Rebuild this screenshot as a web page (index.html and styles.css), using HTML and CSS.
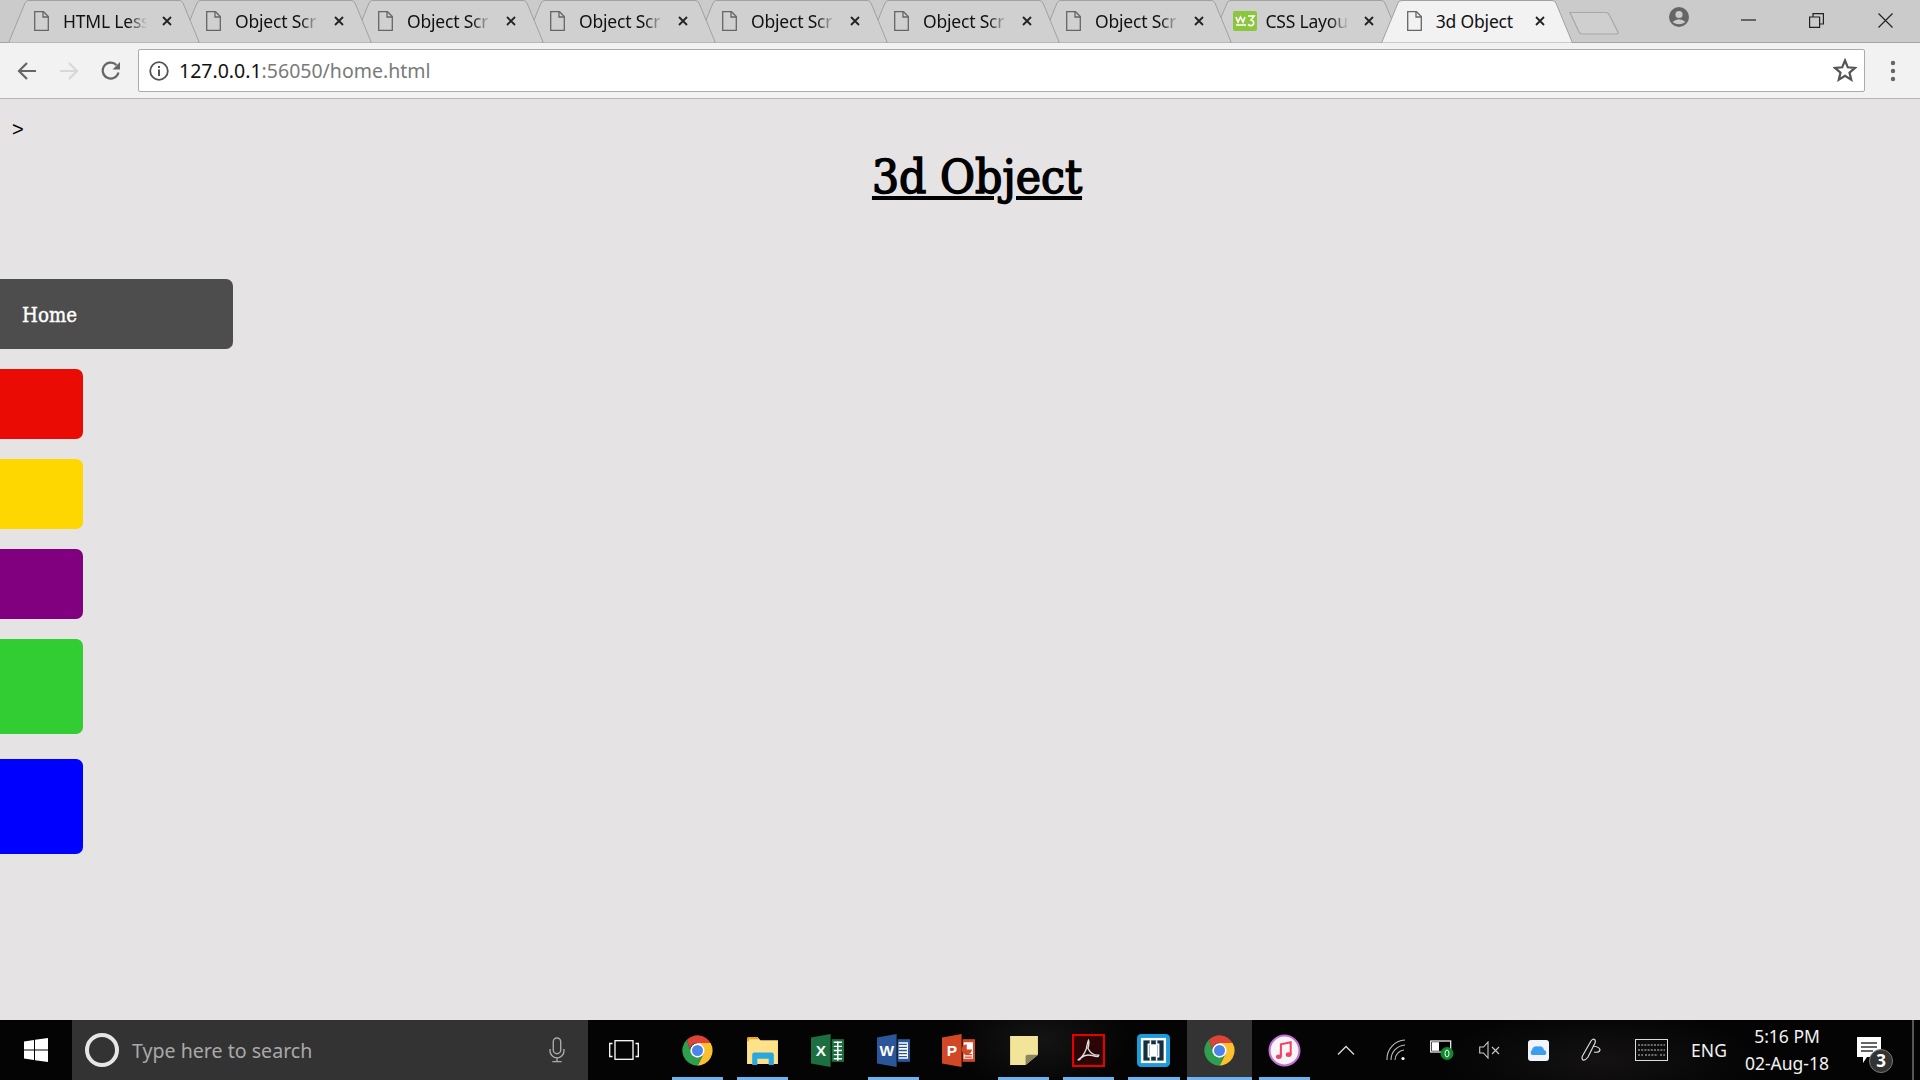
FILE: index.html
```html
<!DOCTYPE html>
<html lang="en">
    <head>
        <meta charset="UTF-8">
        <title>3d Object</title>
        <link rel="stylesheet" href="styles.css">
    </head>

    <body>
        <svg class="defs" width="0" height="0">
            <symbol id="tab-shape" viewBox="0 0 192 43">
                <path d="M0.5 43 L17 3 Q18 0.5 21 0.5 H171 Q174 0.5 175 3 L191.5 43 Z"/>
            </symbol>
            <symbol id="page-icon" viewBox="0 0 15 20">
                <path d="M0.7 0.7 H9.5 L14.3 5.5 V19.3 H0.7 Z" fill="none" stroke="#666" stroke-width="1.3"/>
                <path d="M9 1 V6 H14" fill="none" stroke="#666" stroke-width="1.3"/>
            </symbol>
            <symbol id="close-x" viewBox="0 0 10 10">
                <path d="M1 1 L9 9 M9 1 L1 9" stroke="#222" stroke-width="1.8"/>
            </symbol>
            <symbol id="chrome" viewBox="0 0 48 48">
                <path d="M8.4 8.4 A22 22 0 0 1 43.05 13 H24 A10 10 0 0 0 15.34 29 Z" fill="#db4437"/>
                <path d="M43.05 13 A22 22 0 0 1 24 46 L32.66 29 A10 10 0 0 0 24 14 V13 Z" fill="#fbc02d"/>
                <path d="M8.4 8.4 A22 22 0 0 0 24 46 L32.66 29 A10 10 0 0 1 15.34 29 Z" fill="#2e9e4f"/>
                <circle cx="24" cy="24" r="10.5" fill="#fff"/>
                <circle cx="24" cy="24" r="8" fill="#4a86e8"/>
            </symbol>
        </svg>

        <div class="tabbar">
            <div class="tab"><svg class="tab-bg"><use href="#tab-shape"/></svg><svg class="tab-icon"><use href="#page-icon"/></svg><span class="tab-title">HTML Less</span><svg class="tab-close"><use href="#close-x"/></svg></div>
            <div class="tab"><svg class="tab-bg"><use href="#tab-shape"/></svg><svg class="tab-icon"><use href="#page-icon"/></svg><span class="tab-title">Object Scr</span><svg class="tab-close"><use href="#close-x"/></svg></div>
            <div class="tab"><svg class="tab-bg"><use href="#tab-shape"/></svg><svg class="tab-icon"><use href="#page-icon"/></svg><span class="tab-title">Object Scr</span><svg class="tab-close"><use href="#close-x"/></svg></div>
            <div class="tab"><svg class="tab-bg"><use href="#tab-shape"/></svg><svg class="tab-icon"><use href="#page-icon"/></svg><span class="tab-title">Object Scr</span><svg class="tab-close"><use href="#close-x"/></svg></div>
            <div class="tab"><svg class="tab-bg"><use href="#tab-shape"/></svg><svg class="tab-icon"><use href="#page-icon"/></svg><span class="tab-title">Object Scr</span><svg class="tab-close"><use href="#close-x"/></svg></div>
            <div class="tab"><svg class="tab-bg"><use href="#tab-shape"/></svg><svg class="tab-icon"><use href="#page-icon"/></svg><span class="tab-title">Object Scr</span><svg class="tab-close"><use href="#close-x"/></svg></div>
            <div class="tab"><svg class="tab-bg"><use href="#tab-shape"/></svg><svg class="tab-icon"><use href="#page-icon"/></svg><span class="tab-title">Object Scr</span><svg class="tab-close"><use href="#close-x"/></svg></div>
            <div class="tab">
                <svg class="tab-bg"><use href="#tab-shape"/></svg>
                <svg class="tab-icon w3-icon" viewBox="0 0 24 20">
                    <rect width="24" height="20" rx="2" fill="#8cc63f"/>
                    <path d="M3 6 L5 11 L7.5 6 L10 11 L12 6 M3 14 H13 M15 5 H21 L18 9 Q21.5 10 20.5 13 Q18.5 16 15 13.5" fill="none" stroke="#fff" stroke-width="1.6"/>
                </svg>
                <span class="tab-title">CSS Layou</span>
                <svg class="tab-close"><use href="#close-x"/></svg>
            </div>
            <div class="tab active"><svg class="tab-bg"><use href="#tab-shape"/></svg><svg class="tab-icon"><use href="#page-icon"/></svg><span class="tab-title">3d Object</span><svg class="tab-close"><use href="#close-x"/></svg></div>

            <svg class="new-tab" viewBox="0 0 50 24"><path d="M1 1.5 H37 Q39 1.5 40 3.5 L49 21 Q49.5 23 47 23 H13 Q11 23 10 21 Z"/></svg>

            <div class="window-btns">
                <svg class="avatar" viewBox="0 0 20 20"><circle cx="10" cy="10" r="10" fill="#666"/><circle cx="10" cy="7.5" r="3.6" fill="#cbcbcb"/><path d="M3.5 15 Q10 9.5 16.5 15 Q10 19.5 3.5 15 Z" fill="#cbcbcb"/></svg>
                <svg class="win-min" viewBox="0 0 15 2"><path d="M0 1 H15" stroke="#222" stroke-width="1.2"/></svg>
                <svg class="win-max" viewBox="0 0 15 15"><path d="M0.6 4 H10.6 V14.4 H0.6 Z M4 4 V0.6 H14.4 V11 H10.6" fill="none" stroke="#222" stroke-width="1.2"/></svg>
                <svg class="win-close" viewBox="0 0 15 15"><path d="M0.5 0.5 L14.5 14.5 M14.5 0.5 L0.5 14.5" stroke="#222" stroke-width="1.2"/></svg>
            </div>
        </div>

        <div class="toolbar">
            <svg class="nav-icon" viewBox="0 0 20 20"><path d="M19 10 H2.5 M10 2 L2 10 L10 18" fill="none" stroke="#666" stroke-width="2.2"/></svg>
            <svg class="nav-icon" viewBox="0 0 20 20"><path d="M1 10 H17.5 M10 2 L18 10 L10 18" fill="none" stroke="#d8d8d8" stroke-width="2.2"/></svg>
            <svg class="nav-icon" viewBox="0 0 20 20"><path d="M17.5 11.5 A8 8 0 1 1 15.5 4" fill="none" stroke="#666" stroke-width="2.2"/><path d="M19 1 V8.5 H11.5 Z" fill="#666"/></svg>
            <div class="omnibox">
                <svg class="info-icon" viewBox="0 0 20 20"><circle cx="10" cy="10" r="8.8" fill="none" stroke="#555" stroke-width="1.8"/><rect x="9" y="8.5" width="2" height="6.5" fill="#555"/><rect x="9" y="5" width="2" height="2" fill="#555"/></svg>
                <span class="url"><span class="url-host">127.0.0.1</span>:56050/home.html</span>
                <svg class="star-icon" viewBox="0 0 24 24"><path d="M12 2.5 L14.8 9.3 L22 9.9 L16.5 14.6 L18.2 21.7 L12 17.9 L5.8 21.7 L7.5 14.6 L2 9.9 L9.2 9.3 Z" fill="none" stroke="#555" stroke-width="2.2" stroke-linejoin="miter"/></svg>
            </div>
            <svg class="menu-icon" viewBox="0 0 6 22"><circle cx="3" cy="3" r="2.2"/><circle cx="3" cy="11" r="2.2"/><circle cx="3" cy="19" r="2.2"/></svg>
        </div>

        <main class="page">
            <p class="stray">&gt;</p>
            <h1 class="title">3d Object</h1>
            <nav class="side-nav">
                <a class="nav-item home">Home</a>
                <a class="nav-item small red"></a>
                <a class="nav-item small gold"></a>
                <a class="nav-item small purple"></a>
                <a class="nav-item small tall green"></a>
                <a class="nav-item small tall blue"></a>
            </nav>
        </main>

        <footer class="taskbar">
            <div class="start">
                <svg class="win-logo" viewBox="0 0 24 24"><path d="M0 3.4 L10 2 V11.4 H0 Z M11 1.8 L24 0 V11.4 H11 Z M0 12.6 H10 V22 L0 20.6 Z M11 12.6 H24 V24 L11 22.2 Z" fill="#fff"/></svg>
            </div>
            <div class="search">
                <span class="cortana"></span>
                <span class="search-text">Type here to search</span>
                <svg class="mic" viewBox="0 0 18 28"><rect x="5" y="1" width="8" height="17" rx="4" fill="none" stroke="#aaa" stroke-width="1.5"/><path d="M1.5 13 V15 A7.5 7.5 0 0 0 16.5 15 V13 M9 22.5 V26 M4 26.5 H14" fill="none" stroke="#aaa" stroke-width="1.5"/></svg>
            </div>
            <div class="task-view">
                <svg viewBox="0 0 30 20" width="30" height="20"><rect x="6" y="0.7" width="18" height="18.6" fill="none" stroke="#fff" stroke-width="1.3"/><path d="M3.5 3.5 H0.7 V16.5 H3.5 M26.5 3.5 H29.3 V16.5 H26.5" fill="none" stroke="#fff" stroke-width="1.3"/></svg>
            </div>

            <div class="apps">
                <div class="app running"><svg class="app-icon"><use href="#chrome"/></svg></div>
                <div class="app running">
                    <svg class="app-icon" viewBox="0 0 32 32">
                        <path d="M1 5 Q1 3 3 3 H11 L14 6 H31 V29 H1 Z" fill="#fde28a"/>
                        <path d="M1 5 Q1 3 3 3 H11 L13 5 H3 V7 H1 Z" fill="#e8a91e"/>
                        <path d="M6 30 V20 Q6 18 8 18 H25 Q27 18 27 20 V30 H22 V24 H11 V30 Z" fill="#29a8e0"/>
                    </svg>
                </div>
                <div class="app">
                    <svg class="app-icon" viewBox="0 0 32 32">
                        <path d="M20 5 H32 V27 H20 Z" fill="#1d6f42"/>
                        <path d="M22 8 H30 M22 12 H30 M22 16 H30 M22 20 H30 M22 24 H30 M26 7 V26" stroke="#fff" stroke-width="1.4"/>
                        <path d="M0 3.5 L19 0 V32 L0 28.5 Z" fill="#1d6f42"/>
                        <text class="office-letter" x="9.5" y="21" text-anchor="middle">X</text>
                    </svg>
                </div>
                <div class="app running">
                    <svg class="app-icon" viewBox="0 0 32 32">
                        <path d="M20 5 H32 V27 H20 Z" fill="#2b579a"/>
                        <path d="M21 8 H30 V24 H21 Z" fill="#fff"/>
                        <path d="M21 10 H29 M21 13 H29 M21 16 H29 M21 19 H29 M21 22 H29" stroke="#2b579a" stroke-width="1.3"/>
                        <path d="M0 3.5 L19 0 V32 L0 28.5 Z" fill="#2b579a"/>
                        <text class="office-letter" x="9.5" y="21" text-anchor="middle">W</text>
                    </svg>
                </div>
                <div class="app">
                    <svg class="app-icon" viewBox="0 0 32 32">
                        <path d="M20 5 H32 V27 H20 Z" fill="#d24726"/>
                        <path d="M21 8 H30 V24 H21 Z" fill="#fff"/>
                        <path d="M24 10 A5 5 0 1 0 29 15 H24 Z" fill="#d24726"/>
                        <path d="M22 20 H29 M22 22.5 H29" stroke="#d24726" stroke-width="1.3"/>
                        <path d="M0 3.5 L19 0 V32 L0 28.5 Z" fill="#d24726"/>
                        <text class="office-letter" x="9.5" y="21" text-anchor="middle">P</text>
                    </svg>
                </div>
                <div class="app running">
                    <svg class="app-icon" viewBox="0 0 32 32">
                        <path d="M3 2 H30 V20 L18 30 H3 Z" fill="#f2e59a"/>
                        <path d="M30 20 V20 L18 30 V22 Q18 20 20 20 Z" fill="#8a8560"/>
                    </svg>
                </div>
                <div class="app running">
                    <svg class="app-icon" viewBox="0 0 32 32">
                        <rect x="1" y="1" width="30" height="30" fill="#2a0606" stroke="#e60000" stroke-width="2"/>
                        <path d="M6 25 Q11 22 14 14 Q15 8 16 6 Q17 8 15.5 14 Q19 21 26 20.5 Q26 23 20 21 Q13 19 9 23 Q7 26 6 25 Z" fill="none" stroke="#ddd" stroke-width="1.3"/>
                    </svg>
                </div>
                <div class="app running">
                    <svg class="app-icon" viewBox="0 0 32 32">
                        <rect x="0" y="0" width="32" height="32" rx="4" fill="#1a9ddb"/>
                        <rect x="5" y="5" width="22" height="22" fill="#12303f" stroke="#fff" stroke-width="2.4"/>
                        <path d="M13 6 V10 H11 V22 H13 V26 M19 6 V10 H21 V22 H19 V26" fill="none" stroke="#fff" stroke-width="1.5"/>
                        <rect x="12" y="10" width="8" height="12" fill="#fff"/>
                    </svg>
                </div>
                <div class="app running current"><svg class="app-icon"><use href="#chrome"/></svg></div>
                <div class="app running">
                    <svg class="app-icon" viewBox="0 0 32 32">
                        <circle cx="16" cy="16" r="14.5" fill="#f6f6f6" stroke="#c86dd7" stroke-width="2"/>
                        <path d="M12.5 22 V10 L22 8 V20" fill="none" stroke="#f0436b" stroke-width="2"/>
                        <ellipse cx="10.5" cy="22" rx="2.8" ry="2.2" fill="#f0436b"/>
                        <ellipse cx="20" cy="20" rx="2.8" ry="2.2" fill="#f0436b"/>
                    </svg>
                </div>
            </div>

            <div class="tray">
                <div class="tray-cell c-caret"><svg viewBox="0 0 18 10" width="18" height="10"><path d="M1 9.5 L9 1.5 L17 9.5" fill="none" stroke="#ddd" stroke-width="1.3"/></svg></div>
                <div class="tray-cell c-wifi"><svg viewBox="0 0 20 22" width="20" height="22"><path d="M1 21 A19 19 0 0 1 19 1 M5 21 A15 15 0 0 1 19 6 M9 21 A10 10 0 0 1 18 11" fill="none" stroke="#bbb" stroke-width="1.1"/><circle cx="17" cy="19.5" r="1.6" fill="#fff"/></svg></div>
                <div class="tray-cell c-batt"><svg viewBox="0 0 24 22" width="24" height="22"><rect x="0.7" y="2" width="20" height="11" fill="#000" stroke="#fff" stroke-width="1.2"/><rect x="2" y="3.2" width="7" height="8.6" fill="#fff"/><circle cx="17" cy="14.5" r="6.5" fill="#0e8a2c"/><ellipse cx="17" cy="14.5" rx="2" ry="3.5" fill="none" stroke="#fff"/></svg></div>
                <div class="tray-cell c-vol"><svg viewBox="0 0 21 18" width="21" height="18"><path d="M0.7 6 H4.5 L9 1 V17 L4.5 12 H0.7 Z" fill="none" stroke="#ccc" stroke-width="1.1"/><path d="M13 6 L20 13 M20 6 L13 13" stroke="#ccc" stroke-width="1.1"/></svg></div>
                <div class="tray-cell c-cloud"><svg viewBox="0 0 21 21" width="21" height="21"><rect width="21" height="21" rx="3" fill="#f1f4f8"/><path d="M4 15 A3 3 0 0 1 4 10 A4.5 4.5 0 0 1 10 6.5 A4.5 4.5 0 0 1 16 10 A2.7 2.7 0 0 1 17 15 Z" fill="#3b9cf0"/></svg></div>
                <div class="tray-cell c-pen"><svg viewBox="0 0 22 24" width="22" height="24"><path d="M2 22 Q0 20 2 17 L10 3 Q12 0 14 2 Q15 4 13 7 L7 19 Q4 23 2 22 Z M12 8 Q19 9 19 12 Q18 15 13 14" fill="none" stroke="#ddd" stroke-width="1.2"/></svg></div>
                <div class="tray-cell c-kbd"><svg viewBox="0 0 33 22" width="33" height="22"><rect x="0.5" y="0.5" width="32" height="21" fill="none" stroke="#ddd"/><path d="M3 6 H30 M3 11 H30 M3 16 H8 M10 16 H23 M25 16 H30" stroke="#ccc" stroke-dasharray="2 1.2"/></svg></div>
                <div class="tray-cell c-lang">ENG</div>
                <div class="tray-cell c-clock">
                    <span>5:16 PM</span>
                    <span>02-Aug-18</span>
                </div>
                <div class="tray-cell c-notif">
                    <svg viewBox="0 0 24 26" width="24" height="26"><path d="M0 0 H24 V20 H10 L6 26 V20 H0 Z" fill="#fff"/><path d="M4 6 H20 M4 10 H20 M4 14 H16" stroke="#333" stroke-width="1.3"/></svg>
                    <span class="notif-badge">3</span>
                </div>
            </div>
            <div class="show-desktop"></div>
        </footer>
    </body>
</html>
```

FILE: styles.css
```css
html, body {
    margin: 0;
    height: 100%;
}

body {
    width: 1920px;
    height: 1080px;
    overflow: hidden;
    display: flex;
    flex-direction: column;
    background-color: #e5e3e4;
    font-family: "Noto Sans", Arial, sans-serif;
}

.defs {
    position: absolute;
}

/* tab strip */
.tabbar {
    height: 42px;
    flex: none;
    display: flex;
    background-color: #cbcbcb;
    border-bottom: 1px solid #a3a3a3;
    padding-left: 8px;
}

.tab {
    position: relative;
    flex: none;
    width: 192px;
    height: 43px;
    margin-right: -20px;
    display: flex;
    align-items: center;
    padding-bottom: 1px;
    box-sizing: border-box;
}

.tab:nth-child(1) { z-index: 9; }
.tab:nth-child(2) { z-index: 8; }
.tab:nth-child(3) { z-index: 7; }
.tab:nth-child(4) { z-index: 6; }
.tab:nth-child(5) { z-index: 5; }
.tab:nth-child(6) { z-index: 4; }
.tab:nth-child(7) { z-index: 3; margin-right: -21.6px; }
.tab:nth-child(8) { z-index: 2; margin-right: -21.6px; }
.tab.active { z-index: 10; margin-right: -20.4px; }

.tab-bg {
    position: absolute;
    left: 0;
    top: 0;
    width: 192px;
    height: 43px;
    fill: #d0d0d0;
    stroke: #a0a0a0;
}

.tab.active .tab-bg {
    fill: #f2f2f2;
}

.tab-icon {
    position: relative;
    flex: none;
    width: 15px;
    height: 20px;
    margin-left: 26px;
}

.w3-icon {
    width: 24px;
    margin-left: 23px;
}

.tab-title {
    position: relative;
    flex: none;
    width: 84px;
    margin-left: 14px;
    font-size: 17.5px;
    letter-spacing: -0.2px;
    color: #111;
    white-space: nowrap;
    -webkit-mask-image: linear-gradient(to right, #000 78%, transparent 100%);
    mask-image: linear-gradient(to right, #000 78%, transparent 100%);
}

.w3-icon + .tab-title {
    margin-left: 8px;
}

.tab.active .tab-title {
    -webkit-mask-image: none;
    mask-image: none;
}

.tab-close {
    position: relative;
    flex: none;
    width: 10px;
    height: 10px;
    margin-left: 15px;
}

.new-tab {
    position: relative;
    z-index: 1;
    flex: none;
    width: 50px;
    height: 24px;
    margin: 11px 0 0 17px;
    fill: #cfcfcf;
    stroke: #a8a8a8;
    stroke-width: 1.2;
}

.window-btns {
    display: flex;
    align-items: center;
    margin-left: 50px;
    height: 36px;
}

.avatar {
    width: 20px;
    height: 20px;
    margin-top: -3px;
}

.win-min {
    width: 15px;
    height: 2px;
    margin-left: 52px;
    margin-top: 4px;
}

.win-max {
    width: 15px;
    height: 15px;
    margin-left: 53px;
    margin-top: 5px;
}

.win-close {
    width: 15px;
    height: 15px;
    margin-left: 54px;
    margin-top: 5px;
}

/* address bar */
.toolbar {
    height: 55px;
    flex: none;
    display: flex;
    align-items: center;
    background-color: #f2f2f2;
    border-bottom: 1px solid #b5b5b5;
}

.nav-icon {
    width: 20px;
    height: 20px;
    margin-left: 17px;
    margin-right: 5px;
}

.omnibox {
    flex: none;
    width: 1725px;
    height: 41px;
    margin-left: 12px;
    display: flex;
    align-items: center;
    background-color: #fff;
    border: 1px solid #ababab;
    border-radius: 2px;
}

.info-icon {
    width: 20px;
    height: 20px;
    margin-left: 10px;
}

.url {
    margin-left: 10px;
    font-size: 19.5px;
    color: #7a7a7a;
}

.url-host {
    color: #111;
}

.star-icon {
    width: 24px;
    height: 24px;
    margin-left: auto;
    margin-right: 7px;
    margin-bottom: 2px;
}

.menu-icon {
    width: 6px;
    height: 22px;
    margin-left: 25px;
    fill: #666;
}

/* page content */
.page {
    flex: 1;
    min-height: 0;
}

.stray {
    margin: 0;
    padding: 20px 0 0 12px;
    font-family: "Liberation Sans", Arial, sans-serif;
    font-size: 20px;
    line-height: 21px;
    color: #000;
}

.title {
    margin: 8px 0 0 34px;
    text-align: center;
    font-family: "DejaVu Serif Condensed", "DejaVu Serif", serif;
    font-size: 47.5px;
    line-height: 58px;
    font-weight: normal;
    -webkit-text-stroke: 1.5px #000;
    text-decoration: underline;
    color: #000;
}

.side-nav {
    display: flex;
    flex-direction: column;
    align-items: flex-start;
    margin-top: 73px;
}

.nav-item {
    display: block;
    box-sizing: border-box;
    height: 70px;
    margin-bottom: 20px;
    border-radius: 0 7px 7px 0;
}

.home {
    width: 233px;
    padding-left: 22px;
    line-height: 72px;
    font-family: "DejaVu Serif Condensed", "DejaVu Serif", serif;
    font-size: 20.3px;
    -webkit-text-stroke: 0.4px #fff;
    color: #fff;
    background-color: #4d4d4d;
}

.small {
    width: 83px;
}

.tall {
    height: 95px;
    margin-bottom: 25px;
}

.red { background-color: #e90b04; }
.gold { background-color: #ffd700; }
.purple { background-color: #800080; }
.green { background-color: #32cd32; }
.blue { background-color: #0000ff; }

/* windows taskbar */
.taskbar {
    height: 60px;
    flex: none;
    display: flex;
    background-color: #040404;
    background-image: radial-gradient(ellipse 90px 50px at 1040px 20px, #141414, transparent),
        radial-gradient(ellipse 160px 50px at 1600px 40px, #141212, transparent);
}

.start {
    flex: none;
    width: 72px;
    display: flex;
    align-items: center;
    justify-content: center;
}

.win-logo {
    width: 24px;
    height: 24px;
}

.search {
    flex: none;
    width: 516px;
    display: flex;
    align-items: center;
    background-color: #333;
}

.cortana {
    flex: none;
    width: 26px;
    height: 26px;
    margin-left: 13px;
    border: 4px solid #e6e6e6;
    border-radius: 50%;
}

.search-text {
    margin-left: 13px;
    font-size: 19.6px;
    color: #a9a9a9;
}

.mic {
    width: 18px;
    height: 26px;
    margin-left: auto;
    margin-right: 22px;
}

.task-view {
    flex: none;
    width: 72px;
    display: flex;
    align-items: center;
    justify-content: center;
}

.apps {
    flex: none;
    display: flex;
    margin-left: 5px;
    width: 650px;
}

.app {
    position: relative;
    flex: none;
    width: 65.2px;
    display: flex;
    align-items: center;
    justify-content: center;
}

.app-icon {
    width: 33px;
    height: 33px;
}

.running::after {
    content: "";
    position: absolute;
    left: 7px;
    right: 7px;
    bottom: 0;
    height: 3px;
    background-color: #6db3f0;
}

.current {
    background-color: #333;
}

.current::after {
    left: 0;
    right: 0;
}

.office-letter {
    font-family: "Liberation Sans", Arial, sans-serif;
    font-size: 15px;
    font-weight: bold;
    fill: #fff;
}

.tray {
    flex: none;
    display: flex;
    margin-left: 6px;
    color: #f2f2f2;
}

.tray-cell {
    flex: none;
    display: flex;
    align-items: center;
    justify-content: center;
}

.c-caret { width: 50px; }
.c-wifi { width: 50px; }
.c-batt { width: 42px; }
.c-vol { width: 52px; }
.c-cloud { width: 46px; }
.c-pen { width: 62px; }
.c-kbd { width: 56px; }

.c-lang {
    width: 60px;
    font-size: 17.5px;
}

.c-clock {
    width: 96px;
    flex-direction: column;
    font-size: 17.5px;
    line-height: 27px;
}

.c-notif {
    position: relative;
    width: 68px;
}

.notif-badge {
    position: absolute;
    left: 34px;
    top: 29px;
    width: 22px;
    height: 22px;
    border: 1px solid #777;
    border-radius: 50%;
    background-color: #333;
    color: #fff;
    font-size: 17px;
    font-weight: bold;
    line-height: 22px;
    text-align: center;
}

.show-desktop {
    flex: none;
    width: 2px;
    margin-left: 9px;
    background-color: #555;
}
```
